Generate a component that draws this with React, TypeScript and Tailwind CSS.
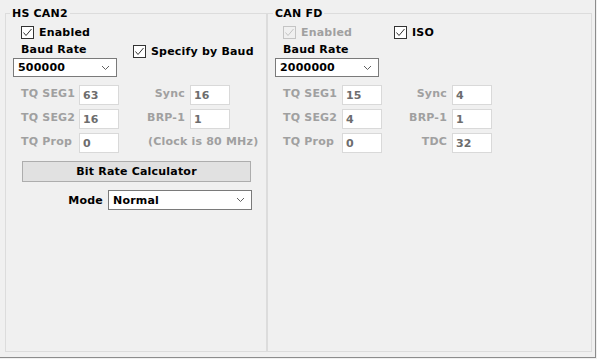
import React from "react";

const FONT = { fontFamily: '"DejaVu Sans", Verdana, sans-serif' };

function Check({ disabled }: { disabled?: boolean }) {
  return (
    <span
      className={
        disabled
          ? "flex h-[13px] w-[13px] shrink-0 items-center justify-center border border-[#c4c4c4]"
          : "flex h-[13px] w-[13px] shrink-0 items-center justify-center border border-[#333333] bg-white"
      }
    >
      <svg width="11" height="11" viewBox="0 0 11 11">
        <polyline
          points="1.5,5.5 4,8.5 9.5,2"
          fill="none"
          stroke={disabled ? "#c4c4c4" : "#333333"}
          strokeWidth="1"
        />
      </svg>
    </span>
  );
}

function CheckLabel({ text, disabled }: { text: string; disabled?: boolean }) {
  return (
    <div className="flex h-[13px] items-center gap-[5px]">
      <Check disabled={disabled} />
      <span className={disabled ? "leading-[13px] text-[#a0a0a0]" : "leading-[13px] text-black"}>{text}</span>
    </div>
  );
}

function Chevron() {
  return (
    <svg width="9" height="6" viewBox="0 0 9 6">
      <polyline points="1,1 4.5,4.5 8,1" fill="none" stroke="#606060" strokeWidth="1" />
    </svg>
  );
}

function Combo({ value, className }: { value: string; className: string }) {
  return (
    <div className={"flex items-center justify-between border border-[#7a7a7a] bg-white pl-[4px] pr-[6px] " + className}>
      <span className="leading-[13px] text-black">{value}</span>
      <Chevron />
    </div>
  );
}

function Field({ value }: { value: string }) {
  return (
    <div className="h-[20px] w-[40px] border border-[#d9d9d9] bg-white pl-[3px] pt-[3px] leading-[13px] text-[#6d6d6d]">
      {value}
    </div>
  );
}

function Lbl({ text, right }: { text: string; right?: boolean }) {
  return (
    <div className={right ? "mt-[2px] h-[13px] whitespace-nowrap pr-[5px] text-right leading-[13px] text-[#a0a0a0]" : "mt-[2px] h-[13px] whitespace-nowrap leading-[13px] text-[#a0a0a0]"}>
      {text}
    </div>
  );
}

export default function App() {
  return (
    <div className="h-[359px] w-[597px] bg-[#f0f0f0] text-[11px] font-bold tracking-[0.2px]" style={FONT}>
      <div className="flex h-[358px] w-[596px] border-b border-r border-[#8c8c8c] pl-[5px]">
        {/* HS CAN2 */}
        <fieldset className="mt-[7px] h-[345px] w-[262px] border border-[#dcdcdc]">
          <legend className="ml-[4px] px-[2px] leading-[13px] text-black">HS CAN2</legend>
          <div className="flex flex-col">
            <div className="ml-[15px] mt-[5px] flex h-[15px] items-center">
              <CheckLabel text="Enabled" />
            </div>
            <div className="mt-[3px] flex h-[15px] items-start">
              <div className="ml-[15px] w-[112px] leading-[13px] text-black">Baud Rate</div>
              <div className="mt-[2px]">
                <CheckLabel text="Specify by Baud" />
              </div>
            </div>
            <Combo value="500000" className="ml-[7px] h-[19px] w-[104px]" />
            <div className="ml-[15px] mt-[8px] grid grid-cols-[58px_40px_71px_40px] gap-y-[4px]">
              <Lbl text="TQ SEG1" />
              <Field value="63" />
              <Lbl text="Sync" right />
              <Field value="16" />
              <Lbl text="TQ SEG2" />
              <Field value="16" />
              <Lbl text="BRP-1" right />
              <Field value="1" />
              <Lbl text="TQ Prop" />
              <Field value="0" />
              <div className="col-span-2 mt-[2px] h-[13px] whitespace-nowrap pl-[29px] leading-[13px] text-[#a0a0a0]">
                (Clock is 80 MHz)
              </div>
            </div>
            <div className="ml-[16px] mt-[8px] flex h-[21px] w-[229px] items-center justify-center border border-[#adadad] bg-[#e1e1e1] leading-[13px] text-black">
              Bit Rate Calculator
            </div>
            <div className="mt-[8px] flex h-[20px] items-center">
              <div className="w-[102px] pr-[5px] text-right leading-[13px] text-black">Mode</div>
              <Combo value="Normal" className="h-[20px] w-[144px]" />
            </div>
          </div>
        </fieldset>

        {/* CAN FD */}
        <fieldset className="mt-[7px] h-[345px] w-[325px] border border-[#dcdcdc]">
          <legend className="ml-[5px] px-[2px] leading-[13px] text-black">CAN FD</legend>
          <div className="flex flex-col">
            <div className="ml-[15px] mt-[5px] flex h-[15px] items-center">
              <div className="w-[111px]">
                <CheckLabel text="Enabled" disabled />
              </div>
              <CheckLabel text="ISO" />
            </div>
            <div className="mt-[3px] flex h-[15px] items-start">
              <div className="ml-[15px] leading-[13px] text-black">Baud Rate</div>
            </div>
            <Combo value="2000000" className="ml-[7px] h-[19px] w-[104px]" />
            <div className="ml-[15px] mt-[8px] grid grid-cols-[59px_40px_70px_40px] gap-y-[4px]">
              <Lbl text="TQ SEG1" />
              <Field value="15" />
              <Lbl text="Sync" right />
              <Field value="4" />
              <Lbl text="TQ SEG2" />
              <Field value="4" />
              <Lbl text="BRP-1" right />
              <Field value="1" />
              <Lbl text="TQ Prop" />
              <Field value="0" />
              <Lbl text="TDC" right />
              <Field value="32" />
            </div>
          </div>
        </fieldset>
      </div>
    </div>
  );
}
